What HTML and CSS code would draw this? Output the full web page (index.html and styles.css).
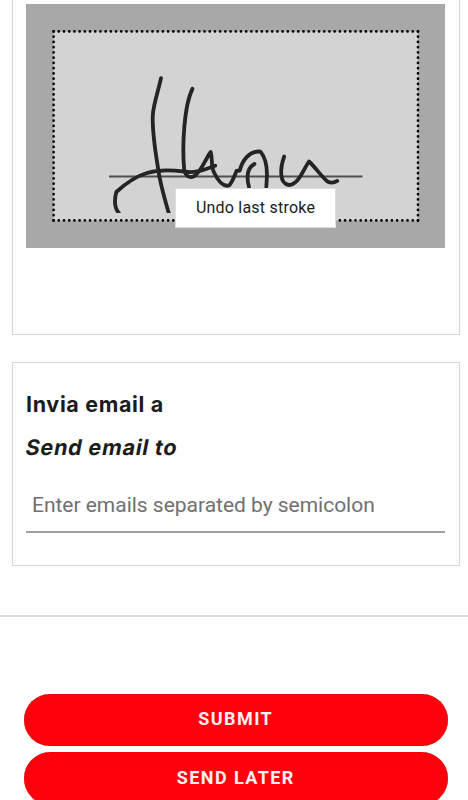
FILE: index.html
```html
<!DOCTYPE html>
<html lang="it">
<head>
    <meta charset="UTF-8">
    <meta name="viewport" content="width=device-width, initial-scale=1.0">
    <title>Invia email</title>
    <link rel="stylesheet" href="styles.css">
</head>
<body>
    <main class="form">
        <section class="card signature-card">
            <div class="signature-pad">
                <svg class="signature" viewBox="26 4 419 244" width="419" height="244">
                    <rect x="53.5" y="31.5" width="364.5" height="189" fill="#d3d3d3"/>
                    <g class="dots">
                        <path d="M53.6 31.4H418.1" stroke-dasharray="0 5.205"/>
                        <path d="M53.6 220.4H418.1" stroke-dasharray="0 5.205"/>
                        <path d="M53.6 31.4V220.5" stroke-dasharray="0 5.25"/>
                        <path d="M418 31.4V220.5" stroke-dasharray="0 5.25"/>
                    </g>
                    <path class="baseline" d="M109 176.6H362.5"/>
                    <svg x="54" y="32" width="364" height="181" viewBox="54 32 364 181">
                        <g class="ink">
                            <path d="M161 78.2C158 92 153.5 104 152.8 115C152 133 155.5 152 158.5 171C160.5 185 165 200 169 214"/>
                            <path d="M119.5 214C114 208 114.5 199 116.3 192C125 184 137 176 147 173C162 168.5 178 171 190 172.2C200 172.3 208 168 215.2 165.7"/>
                            <path d="M192.4 88.8C184 106 182 146 184.2 170C185.5 175.5 189 178.5 193.5 176.5C200 174 206 158 210.7 152C212.5 158 211 166 213.8 172C218 181 223 187 229 185.5C232 183 234.5 176 236.5 171L239.8 170.5C242 161 249 150.5 260.5 151.6C265 157 267 166 267 175L266.3 187"/>
                            <path d="M254.4 164C248 167.5 245.5 174 249 187"/>
                            <path d="M284.2 156.5C280 168 279 184 289 185C299 184 303 170 309 161.5C316 168 321 176 327.5 181.5C331 183.5 334 183 337.3 180.9"/>
                        </g>
                    </svg>
                </svg>
                <div class="tooltip">Undo last stroke</div>
            </div>
        </section>

        <section class="card email-card">
            <h2 class="title">Invia email a</h2>
            <h2 class="title subtitle">Send email to</h2>
            <input class="email-input" type="text" placeholder="Enter emails separated by semicolon">
        </section>
    </main>

    <footer class="actions">
        <button class="btn" type="submit">SUBMIT</button>
        <button class="btn" type="button">SEND LATER</button>
    </footer>
</body>
</html>
```

FILE: styles.css
```css
* {
    box-sizing: border-box;
}

body {
    margin: 0;
    height: 800px;
    overflow: hidden;
    background-color: #fefefe;
    font-family: Roboto, sans-serif;
}

.form {
    display: flex;
    flex-direction: column;
    gap: 27px;
    height: 617px;
    padding: 0 8px 0 12px;
    border-bottom: 2px solid #dcdcdc;
}

.card {
    padding: 0 14px 0 13px;
    border: 1px solid #d6d6d6;
}

.signature-card {
    height: 335px;
    padding-top: 4px;
    border-top: none;
}

.signature-pad {
    position: relative;
    height: 244px;
    background-color: #a8a8a8;
}

.signature {
    display: block;
}

.dots {
    fill: none;
    stroke: #000;
    stroke-width: 2.7;
    stroke-linecap: round;
}

.baseline {
    stroke: #505050;
    stroke-width: 2;
}

.ink {
    fill: none;
    stroke: #242424;
    stroke-width: 3.8;
    stroke-linecap: round;
    stroke-linejoin: round;
}

/* Sits over the lower edge of the pad */
.tooltip {
    position: absolute;
    top: 184px;
    left: 149px;
    width: 161px;
    height: 40px;
    border: 1px solid #dedede;
    background-color: #fff;
    color: #1c1c1c;
    font-size: 16px;
    line-height: 38px;
    letter-spacing: 0.22px;
    text-align: center;
}

.email-card {
    height: 204px;
    padding-top: 26px;
}

.title {
    margin: 0;
    color: #1c1c1c;
    font-family: Inter, sans-serif;
    font-size: 21.5px;
    font-weight: 650;
    line-height: 30px;
    letter-spacing: 0.65px;
}

/* Slanted upright face, keeps the two-storey a */
.subtitle {
    margin-top: 13px;
    letter-spacing: 0.8px;
    transform: skewX(-11deg);
}

.email-input {
    display: block;
    width: 100%;
    height: 54px;
    margin-top: 17px;
    padding: 0 6px;
    border: none;
    border-bottom: 2px solid #a0a0a0;
    background: none;
    font-family: Roboto, sans-serif;
    font-size: 21px;
    letter-spacing: -0.02px;
    outline: none;
}

.email-input::placeholder {
    color: #707070;
}

.actions {
    display: flex;
    flex-direction: column;
    gap: 6px;
    padding: 76.5px 20px 0 23.5px;
}

.btn {
    height: 52.5px;
    padding: 0 6px 2px;
    border: none;
    border-radius: 27px;
    background-color: #ff000d;
    box-shadow: inset 0 0 1px #900;
    color: #fff0f0;
    font-family: Roboto, sans-serif;
    font-size: 18px;
    font-weight: 700;
    letter-spacing: 1.4px;
}
```
